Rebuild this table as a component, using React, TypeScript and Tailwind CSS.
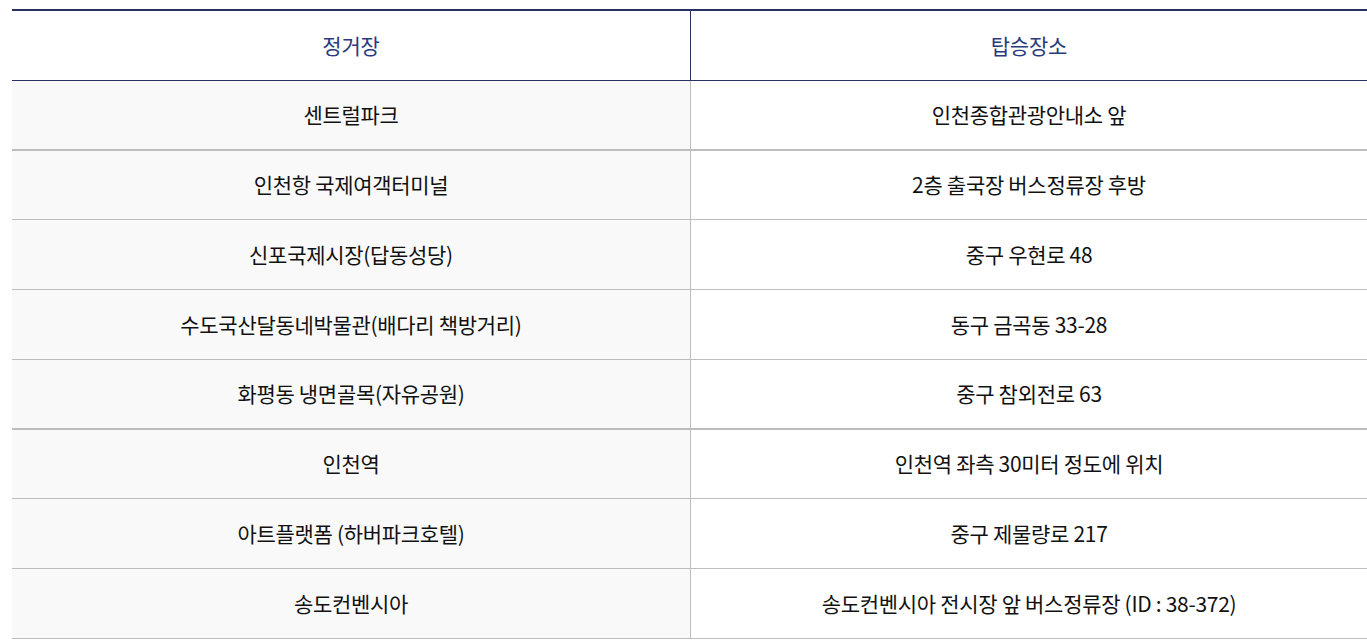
import React from "react";

const rows: { a: string; b: string; h: string; thick?: boolean }[] = [
  { a: "센트럴파크", b: "인천종합관광안내소 앞", h: "h-[70px]", thick: true },
  { a: "인천항 국제여객터미널", b: "2층 출국장 버스정류장 후방", h: "h-[69px]" },
  { a: "신포국제시장(답동성당)", b: "중구 우현로 48", h: "h-[70px]" },
  { a: "수도국산달동네박물관(배다리 책방거리)", b: "동구 금곡동 33-28", h: "h-[70px]" },
  { a: "화평동 냉면골목(자유공원)", b: "중구 참외전로 63", h: "h-[70px]", thick: true },
  { a: "인천역", b: "인천역 좌측 30미터 정도에 위치", h: "h-[69px]" },
  { a: "아트플랫폼 (하버파크호텔)", b: "중구 제물량로 217", h: "h-[70px]" },
  { a: "송도컨벤시아", b: "송도컨벤시아 전시장 앞 버스정류장 (ID : 38-372)", h: "h-[70px]" },
];

export default function App() {
  return (
    <div
      className="w-[1367px] h-[642px] bg-white overflow-hidden pt-[9px] pl-[12px]"
      style={{ fontFamily: '"Noto Sans CJK KR", "Noto Sans", sans-serif' }}
    >
      <div className="border-t-2 border-[#28315f]">
        <div className="flex h-[70px] border-b border-[#28315f] text-[#2a3a7c] text-[21px] tracking-[-0.2px]">
          <div className="w-[679px] flex items-center justify-center border-r border-[#28315f]">정거장</div>
          <div className="flex-1 flex items-center justify-center">탑승장소</div>
        </div>
        {rows.map((r, i) => (
          <div
            key={i}
            className={`flex ${r.h} ${r.thick ? "border-b-2" : "border-b"} border-[#bdbdbd] text-[21px] text-[#111] tracking-[-0.3px]`}
          >
            <div className="w-[679px] bg-[#f9f9f9] flex items-center justify-center border-r border-[#bdbdbd]">{r.a}</div>
            <div className="flex-1 bg-white flex items-center justify-center">{r.b}</div>
          </div>
        ))}
      </div>
    </div>
  );
}
